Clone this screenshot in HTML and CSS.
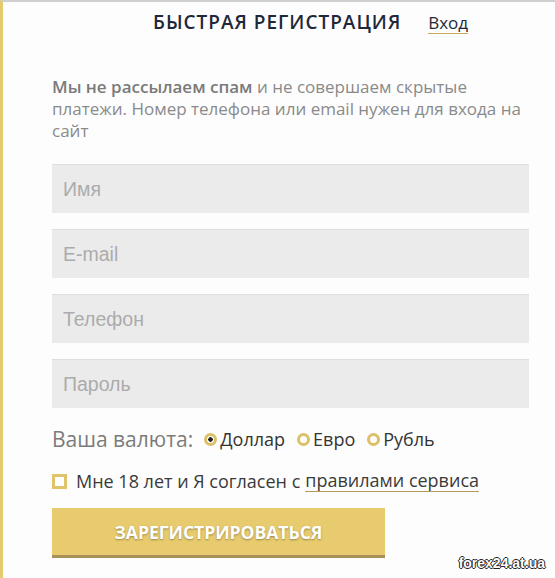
FILE: index.html
```html
<!DOCTYPE html>
<html lang="ru">
<head>
  <meta charset="UTF-8">
  <title>Быстрая регистрация</title>
  <link rel="stylesheet" href="styles.css">
</head>
<body>
  <div class="panel">
    <div class="head">
      <h2 class="title">БЫСТРАЯ РЕГИСТРАЦИЯ</h2>
      <a class="login" href="#">Вход</a>
    </div>
    <p class="note"><b>Мы не рассылаем спам</b> и не совершаем скрытые платежи. Номер телефона или email нужен для входа на сайт</p>
    <form class="form" action="">
      <input class="field" type="text" placeholder="Имя" />
      <input class="field" type="text" placeholder="E-mail" />
      <input class="field" type="text" placeholder="Телефон" />
      <input class="field" type="password" placeholder="Пароль" />
      <div class="currency">
        <span class="currency-label">Ваша валюта:</span>
        <label class="radio"><span class="dot checked"></span>Доллар</label>
        <label class="radio"><span class="dot"></span>Евро</label>
        <label class="radio"><span class="dot"></span>Рубль</label>
      </div>
      <label class="agree"><span class="box"></span>Мне 18 лет и Я согласен с <a href="#">правилами сервиса</a></label>
      <button class="submit" type="button">ЗАРЕГИСТРИРОВАТЬСЯ</button>
    </form>
    <span class="mark">forex24.at.ua</span>
  </div>
</body>
</html>
```

FILE: styles.css
```css
@charset "UTF-8";
body {
  margin: 0;
  background: #fdfdfd;
  font-family: "Open Sans", "Liberation Sans", sans-serif;
}

.panel {
  position: relative;
  height: 576px;
  border-top: 2px solid #cfcfcf;
  border-left: 3px solid #e4cb70;
  padding: 0 26px 0 49px;
}

.head {
  display: flex;
  align-items: baseline;
  padding: 7px 0 0 101px;
}
.title {
  margin: 0;
  font-size: 19px;
  font-weight: 600;
  letter-spacing: 1px;
  color: #1f2838;
}
.login {
  margin-left: 27px;
  font-size: 17px;
  color: #1f2838;
  text-decoration: none;
  border-bottom: 1px solid #c9a95a;
  line-height: 20px;
}

.note {
  margin: 41px 0 22px;
  font-size: 17px;
  line-height: 22px;
  color: #8a8a8a;
}
.note b {
  font-weight: 600;
  color: #7a7a7a;
}

.form {
  display: flex;
  flex-direction: column;
}
.field {
  height: 49px;
  margin-bottom: 16px;
  padding: 0 11px;
  border: 0;
  border-top: 1px solid #dedede;
  background: #ebebeb;
  font: 19.5px "Liberation Sans", Arial, sans-serif;
  box-sizing: border-box;
}
.field::placeholder {
  color: #ababab;
}

.currency {
  display: flex;
  align-items: center;
  margin-top: 1px;
  font-size: 18px;
  color: #333;
}
.currency-label {
  font-size: 21px;
  color: #7b7b7b;
  margin-right: 11px;
}
.radio {
  display: flex;
  align-items: center;
  margin-right: 12px;
}
.dot {
  width: 7px;
  height: 7px;
  margin-right: 3px;
  border: 3px solid #dcc067;
  border-radius: 50%;
  background: #fff;
}
.dot.checked {
  background: radial-gradient(circle, #222 0 2px, #fff 2.5px);
}

.agree {
  display: flex;
  align-items: center;
  margin-top: 16px;
  font-size: 18px;
  color: #3a3a3a;
}
.box {
  width: 9px;
  height: 9px;
  margin-right: 9px;
  border: 3px solid #e0c36a;
  background: #fff;
}
.agree a {
  margin-left: 5px;
  color: #3a3a3a;
  text-decoration: none;
  border-bottom: 1px solid #b49a55;
  line-height: 21px;
}

.submit {
  width: 333px;
  height: 50px;
  margin-top: 15px;
  border: 0;
  border-bottom: 3px solid #a8905a;
  background: #e8cb6e;
  color: #fff;
  font: 700 17.5px "Open Sans", "Liberation Sans", sans-serif;
  text-shadow: 0 1px 2px rgba(0, 0, 0, 0.35);
}

.mark {
  position: absolute;
  right: 10px;
  bottom: 7px;
  font: 700 14px "Liberation Sans", Arial, sans-serif;
  color: #fff;
  text-shadow: -1px 0 #222, 1px 0 #222, 0 -1px #222, 0 1px #222;
}
```
